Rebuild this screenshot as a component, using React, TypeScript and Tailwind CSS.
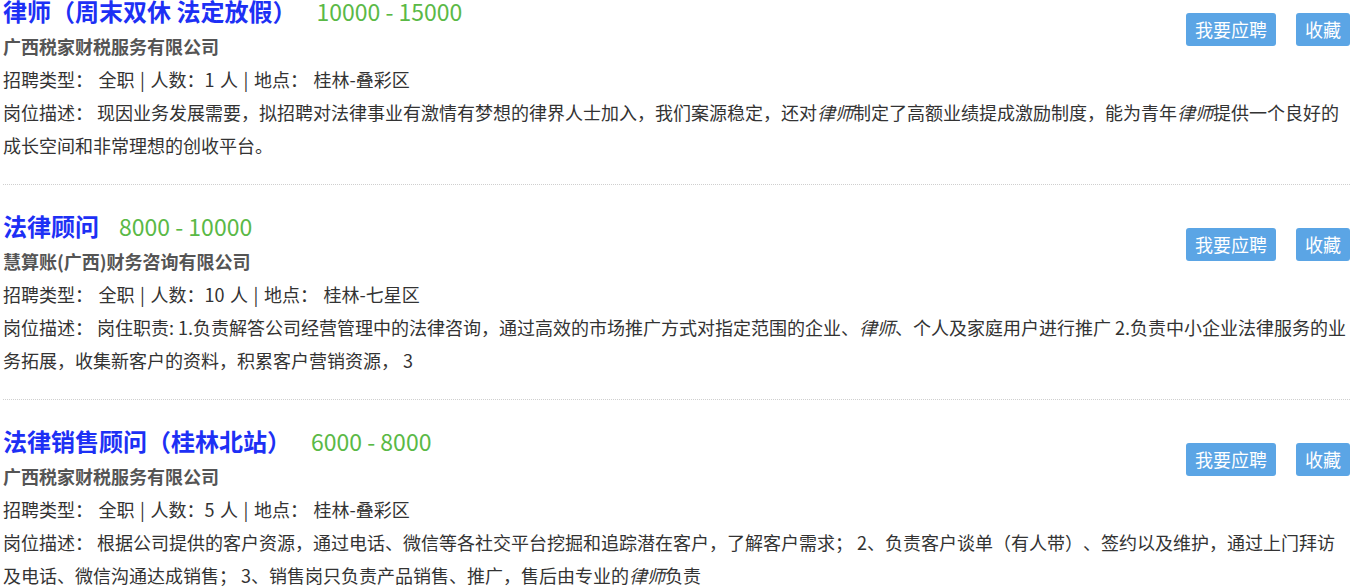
const jobs = [
  {
    title: "律师（周末双休 法定放假）",
    salary: "10000 - 15000",
    company: "广西税家财税服务有限公司",
    count: "1",
    place: "桂林-叠彩区",
    desc: [
      "现因业务发展需要，拟招聘对法律事业有激情有梦想的律界人士加入，我们案源稳定，还对",
      { em: "律师" },
      "制定了高额业绩提成激励制度，能为青年",
      { em: "律师" },
      "提供一个良好的成长空间和非常理想的创收平台。",
    ],
  },
  {
    title: "法律顾问",
    salary: "8000 - 10000",
    company: "慧算账(广西)财务咨询有限公司",
    count: "10",
    place: "桂林-七星区",
    desc: [
      "岗住职责: 1.负责解答公司经营管理中的法律咨询，通过高效的市场推广方式对指定范围的企业、",
      { em: "律师" },
      "、个人及家庭用户进行推广 2.负责中小企业法律服务的业务拓展，收集新客户的资料，积累客户营销资源， 3",
    ],
  },
  {
    title: "法律销售顾问（桂林北站）",
    salary: "6000 - 8000",
    company: "广西税家财税服务有限公司",
    count: "5",
    place: "桂林-叠彩区",
    desc: [
      "根据公司提供的客户资源，通过电话、微信等各社交平台挖掘和追踪潜在客户，了解客户需求； 2、负责客户谈单（有人带）、签约以及维护，通过上门拜访及电话、微信沟通达成销售； 3、销售岗只负责产品销售、推广，售后由专业的",
      { em: "律师" },
      "负责",
    ],
  },
];

type Part = string | { em: string };

export default function App() {
  return (
    <div
      className="w-[1354px] h-[587px] overflow-hidden bg-white [text-spacing-trim:space-all]"
      style={{ fontFamily: '"Noto Sans CJK SC", "Microsoft YaHei", sans-serif' }}
    >
      <div className="-mt-[30px] pl-[3px] pr-[4px]">
        {jobs.map((job, i) => (
          <div
            key={i}
            className="py-[22px] border-b border-dotted border-[#cfcfcf] flow-root"
          >
            {/* Buttons */}
            <div className="float-right mt-[21px] flex gap-5">
              <button className="bg-[#5ba5e5] text-white text-[18px] leading-[33px] px-[9px] rounded-[3px]">
                我要应聘
              </button>
              <button className="bg-[#5ba5e5] text-white text-[18px] leading-[33px] px-[9px] rounded-[3px]">
                收藏
              </button>
            </div>

            <div className="leading-[38px] flex items-baseline">
              <span className="text-[24px] font-bold text-[#1d30f5]">{job.title}</span>
              <span className="ml-5 text-[23px] text-[#5ab946]">{job.salary}</span>
            </div>
            <div className="text-[18px] leading-[33px] font-bold text-[#555555]">
              {job.company}
            </div>
            <div className="text-[18px] leading-[33px] text-[#333333] [word-spacing:1.5px]">
              招聘类型：&nbsp;全职 | 人数：{job.count} 人 | 地点：&nbsp;{job.place}
            </div>
            <div className="text-[18px] leading-[33px] text-[#333333]">
              岗位描述：&nbsp;
              {(job.desc as Part[]).map((p, j) =>
                typeof p === "string" ? (
                  <span key={j}>{p}</span>
                ) : (
                  <em key={j} className="italic">
                    {p.em}
                  </em>
                )
              )}
            </div>
          </div>
        ))}
      </div>
    </div>
  );
}
